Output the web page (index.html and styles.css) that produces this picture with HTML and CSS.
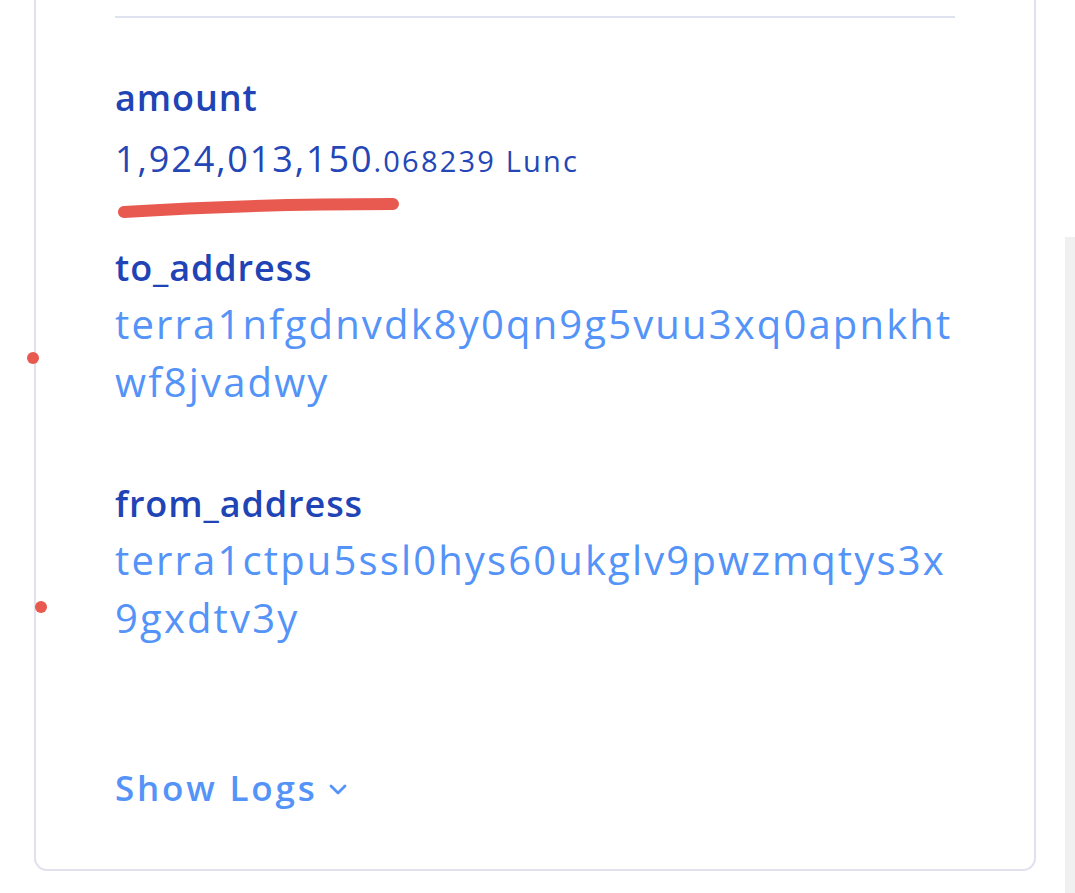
FILE: index.html
```html
<!DOCTYPE html>
<html lang="en">
<head>
<meta charset="utf-8">
<title>Message detail</title>
<link rel="stylesheet" href="styles.css">
</head>
<body>
  <div class="card">
    <div class="rule"></div>
    <div class="field field-amount">
      <div class="label">amount</div>
      <div class="amount-value">
        <span class="int">1,924,013,150</span><span class="dec">.068239 Lunc</span>
        <svg class="mark-underline" width="300" height="30" viewBox="0 0 300 30" aria-hidden="true">
          <path d="M9 20 C 70 16, 170 12, 278 12" fill="none" stroke="#e85a50" stroke-width="12" stroke-linecap="round"/>
        </svg>
      </div>
    </div>
    <div class="field field-addr">
      <div class="label">to_address</div>
      <div class="addr">terra1nfgdnvdk8y0qn9g5vuu3xq0apnkhtwf8jvadwy</div>
      <span class="mark-dot dot-1"></span>
    </div>
    <div class="field field-addr">
      <div class="label">from_address</div>
      <div class="addr">terra1ctpu5ssl0hys60ukglv9pwzmqtys3x9gxdtv3y</div>
      <span class="mark-dot dot-2"></span>
    </div>
    <div class="logs">
      <span class="logs-text">Show Logs</span>
      <svg class="chev" width="20" height="14" viewBox="0 0 20 14" aria-hidden="true">
        <path d="M3 4 L10 11 L17 4" fill="none" stroke="#5493f7" stroke-width="2.8" stroke-linecap="round" stroke-linejoin="round"/>
      </svg>
    </div>
  </div>
  <div class="scroll-track"></div>
</body>
</html>
```

FILE: styles.css
```css
html, body {
  margin: 0;
  padding: 0;
  background: #ffffff;
}

body {
  font-family: "Open Sans", "Noto Sans", sans-serif;
  height: 893px;
  overflow: hidden;
}

.card {
  position: relative;
  margin-left: 34px;
  width: 1002px;
  box-sizing: border-box;
  border: 2px solid #e0e1ed;
  border-top: none;
  border-radius: 0 0 13px 13px;
  padding: 16px 79px 59px 79px;
}

.rule {
  height: 2px;
  background: #dfe3f0;
  margin-bottom: 58px;
}

.field {
  position: relative;
}

.field-amount {
  margin-bottom: 63px;
}

.field-addr {
  margin-bottom: 71px;
}

.label {
  font-size: 36px;
  line-height: 44px;
  font-weight: 600;
  color: #2043b5;
  letter-spacing: 0.9px;
  margin-bottom: 5px;
}

.amount-value {
  position: relative;
  color: #2446b6;
  font-size: 36px;
  line-height: 44px;
  margin-top: 17px;
}

.int {
  font-size: 36px;
  letter-spacing: 1.9px;
}

.dec {
  font-size: 29px;
  letter-spacing: 2.2px;
}

.mark-underline {
  position: absolute;
  left: 0;
  top: 55px;
}

.addr {
  font-size: 40px;
  line-height: 58px;
  color: #5493f7;
  letter-spacing: 2.15px;
  word-break: break-all;
}

.mark-dot {
  position: absolute;
  width: 12px;
  height: 12px;
  border-radius: 50%;
  background: #e85a50;
}

.dot-1 {
  left: -88px;
  top: 106px;
}

.dot-2 {
  left: -80px;
  top: 119px;
}

.logs {
  display: flex;
  align-items: center;
  gap: 10px;
  margin-top: 119px;
  height: 44px;
}

.logs-text {
  font-size: 35px;
  line-height: 44px;
  font-weight: 600;
  color: #5493f7;
  letter-spacing: 2.8px;
}

.chev {
  margin-top: 2px;
}

.scroll-track {
  position: fixed;
  right: 0;
  top: 237px;
  bottom: 0;
  width: 10px;
  background: #f0f0f0;
}
```
